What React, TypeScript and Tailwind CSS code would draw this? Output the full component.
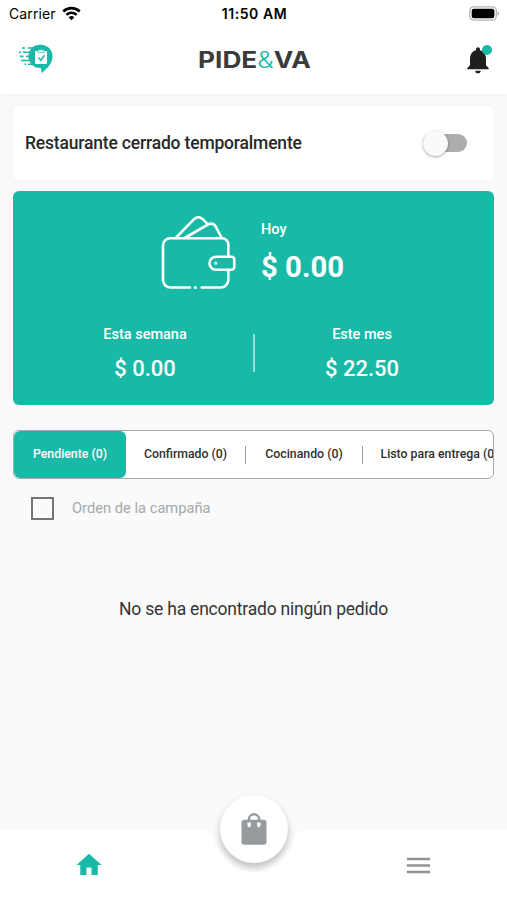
import { useState } from "react";
import { MdHome, MdMenu, MdNotifications } from "react-icons/md";

const tabs = [
  { label: "Pendiente (0)", width: "w-[112px]" },
  { label: "Confirmado (0)", width: "w-[120px]" },
  { label: "Cocinando (0)", width: "w-[117px]" },
  { label: "Listo para entrega (0)", width: "w-[153px]" },
];

function StatusBar() {
  return (
    <div className="grid grid-cols-3 items-center h-7 pl-[9px] pr-[7px] text-black font-['Inter',sans-serif]">
      <div className="flex items-center gap-1.5 -mt-px">
        <span className="text-[14px] tracking-[0.1px]">Carrier</span>
        <svg className="w-[19px] h-[15px]" viewBox="0 0 19 15" fill="none" stroke="currentColor">
          <path d="M1.3 5.5a11.8 11.8 0 0 1 16.4 0" strokeWidth="2.7" />
          <path d="M4.4 8.8a7.3 7.3 0 0 1 10.2 0" strokeWidth="2.5" />
          <path d="M9.5 14.2 6.7 11.3a4.2 4.2 0 0 1 5.6 0Z" fill="currentColor" stroke="none" />
        </svg>
      </div>
      <span className="-mt-px text-center text-[14px] font-semibold tracking-[0.55px] whitespace-nowrap">
        11:50 AM
      </span>
      <svg className="w-[31px] h-[15px] justify-self-end -mt-[2px]" viewBox="0 0 31 15">
        <rect x=".8" y=".9" width="26.5" height="13.2" rx="4" fill="#fff" stroke="#b4b4b4" strokeWidth="1.3" />
        <rect x="2.7" y="2.8" width="22.7" height="9.4" rx="2.2" fill="#000" />
        <path d="M28.7 5.2a2.6 2.6 0 0 1 0 4.6Z" fill="#aaa" />
      </svg>
    </div>
  );
}

function BrandMark() {
  return (
    <svg className="w-9 h-[31px]" viewBox="0 0 36 31" fill="#18b9a6">
      <path d="M22.5.8c7 0 12 5 12 11.8 0 7.2-5.5 11.8-10.7 16.7l-1-5.2c-4.2 0-7.2-1.2-9.2-3.6C11.3 18 10.5 15.500 10.500 12.500 10.500 5.500 15.500.8 22.500.8Z" />
      <path
        d="M10 4h7M4 4h3M5 8.200h8M1 8.200h2M8 12.400h5M2 12.400h3.500M3 16.500h10M10 20.300h5M6.500 20.300h1.700"
        fill="none"
        stroke="#18b9a6"
        strokeWidth="1.6"
      />
      <rect x="17" y="7" width="12" height="13" rx="1.3" fill="#fff" />
      <path d="M20 5.800h6v2.600h-6z" fill="#fff" stroke="#18b9a6" strokeWidth=".7" />
      <path d="m20.600 13.500 2.200 2.800 3.700-5" fill="none" stroke="#18b9a6" strokeWidth="1.5" />
    </svg>
  );
}

function Header() {
  return (
    <header className="h-[94px] bg-white shadow-[0_1px_4px_rgba(0,0,0,0.04)]">
      <StatusBar />
      <div className="flex items-center justify-between h-[63px] pl-[18px] pr-[12px]">
        <BrandMark />
        <h1 className="flex items-center mt-px mr-[5px] text-[23px] leading-none font-bold text-[#3b3b3b] font-['Inter',sans-serif] scale-x-[1.14]">
          PIDE<span className="font-light text-[#18b9a6]">&amp;</span>VA
        </h1>
        <button className="relative w-[36px] h-8 text-[#1f1f1f]" aria-label="Notificaciones">
          <MdNotifications className="w-[32px] h-[32px] ml-[3px]" />
          <span className="absolute top-px right-[3px] w-[10px] h-[10px] rounded-full bg-[#18b9a6]" />
        </button>
      </div>
    </header>
  );
}

function WalletIcon() {
  return (
    <svg
      className="w-[76px] h-[76px]"
      viewBox="0 0 76 76"
      fill="none"
      stroke="#fff"
      strokeWidth="2.6"
      strokeLinecap="round"
      strokeLinejoin="round"
    >
      <path d="M29 72.500H9.500a7.500 7.500 0 0 1-7.500-7.500V30.500a7.200 7.200 0 0 1 7.200-7.200H61a6.300 6.300 0 0 1 6.300 6.300v12" />
      <path d="M67.300 54.700v10.200a7.600 7.600 0 0 1-7.600 7.600h-19" />
      <path d="M55 41.700h15.500a2.800 2.800 0 0 1 2.800 2.800v7.400a2.800 2.800 0 0 1-2.800 2.800H55a6.500 6.500 0 0 1 0-13Z" />
      <path d="M14.700 23 33 4.200q4.500-4.200 8.700 0l4.700 4.700" />
      <path d="m23.700 23 23.500-13.600q4.800-2.200 7.400 2l6.100 11.600" />
      <path d="M34.300 72.500h.1M54.700 48.200h.1" strokeWidth="3" />
    </svg>
  );
}

function EarningsCard() {
  return (
    <section className="h-[214px] mt-[11px] pt-[24px] rounded-[6px] bg-[#18b9a6] text-white">
      <div className="flex pl-[148px] gap-[24px]">
        <WalletIcon />
        <div className="pt-[5px]">
          <p className="text-[14.5px] leading-5 font-medium">Hoy</p>
          <p className="mt-[9px] text-[29.3px] leading-[36px] font-bold">$ 0.00</p>
        </div>
      </div>
      <div className="flex justify-center items-start mt-[34px] text-center">
        <div className="w-[217px] pl-[2px]">
          <p className="text-[14.5px] leading-5 font-medium">Esta semana</p>
          <p className="mt-[10px] text-[22px] leading-7 font-medium">$ 0.00</p>
        </div>
        <div className="w-[2px] h-[38px] mt-[9px] bg-white/55" />
        <div className="w-[217px] pr-[2px]">
          <p className="text-[14.5px] leading-5 font-medium">Este mes</p>
          <p className="mt-[10px] text-[22px] leading-7 font-medium">$ 22.50</p>
        </div>
      </div>
    </section>
  );
}

function OrderTabs() {
  const [active, setActive] = useState(0);

  return (
    <div className="flex h-[49px] mt-[25px] overflow-hidden rounded-[6px] border border-[#a7abab] bg-white">
      {tabs.map((tab, index) => (
        <button
          key={tab.label}
          onClick={() => setActive(index)}
          className={`flex items-center shrink-0 ${tab.width} h-full text-[12.3px] font-medium ${
            active === index ? "rounded-[6px] bg-[#18b9a6] text-white" : "text-[#303030]"
          }`}
        >
          <span className="flex-1 whitespace-nowrap text-center">{tab.label}</span>
          {index > 0 && index < 3 && <span className="w-px h-[18px] bg-[#9b9b9b]" />}
        </button>
      ))}
    </div>
  );
}

function BottomNav() {
  return (
    <nav className="relative h-[70px]">
      <svg className="absolute inset-0 w-full h-full" viewBox="0 0 507 70">
        <path d="M0 0h201c7 0 10 3 13 9 6 16 20 33 40 33s34-17 40-33c3-6 6-9 13-9h200v70H0Z" fill="#fff" />
      </svg>
      <div className="relative flex items-center justify-between h-full pl-[74px] pr-[73px]">
        <button aria-label="Inicio">
          <MdHome className="w-[30px] h-[30px] text-[#18b9a6]" />
        </button>
        <button aria-label="Menú">
          <MdMenu className="w-[31px] h-[31px] text-[#929292]" />
        </button>
      </div>
      <button
        aria-label="Pedidos"
        className="absolute left-[220px] -top-[35px] flex items-center justify-center w-[68px] h-[68px] rounded-full bg-white shadow-[0_4px_7px_rgba(0,0,0,0.25)]"
      >
        <svg className="w-[26px] h-8" viewBox="0 0 26 32">
          <path d="M7.800 9V6.500a5.200 5.200 0 0 1 10.400 0V9" fill="none" stroke="#969b9d" strokeWidth="2.4" />
          <rect x=".5" y="6.800" width="25" height="25" rx="2.800" fill="#969b9d" />
          <path d="M6.500 9.500h3.400v2.700a1.700 2 0 0 1-3.400 0ZM16.100 9.500h3.400v2.700a1.700 2 0 0 1-3.400 0Z" fill="#fff" />
        </svg>
      </button>
    </nav>
  );
}

export default function App() {
  const [closed, setClosed] = useState(false);
  const [campaign, setCampaign] = useState(false);

  return (
    <div className="flex flex-col w-[507px] h-[900px] overflow-hidden bg-[#fafafa] font-['Roboto',sans-serif]">
      <Header />
      <main className="flex-1 px-[13px] pt-3">
        <section className="flex items-center justify-between h-[74px] pl-[12px] pr-[27px] rounded-[5px] bg-white shadow-[0_0_8px_rgba(0,0,0,0.035)]">
          <h2 className="text-[17.5px] tracking-[-0.18px] font-medium text-[#292929]">
            Restaurante cerrado temporalmente
          </h2>
          <button
            role="switch"
            aria-checked={closed}
            onClick={() => setClosed(!closed)}
            className={`flex items-center w-[44px] h-[18px] rounded-full bg-[#acacac] ${closed ? "justify-end" : ""}`}
          >
            <span className="w-[25px] h-[25px] rounded-full bg-[#fafafa] shadow-[0_1px_3px_rgba(0,0,0,0.35)]" />
          </button>
        </section>
        <EarningsCard />
        <OrderTabs />
        <button
          role="checkbox"
          aria-checked={campaign}
          onClick={() => setCampaign(!campaign)}
          className="flex items-center gap-[18px] h-6 mt-[17px] ml-[18px]"
        >
          <span className={`w-[23px] h-[23px] border-2 border-[#747474] ${campaign ? "bg-[#18b9a6]" : ""}`} />
          <span className="text-[14.7px] text-[#a4a8a9]">Orden de la campaña</span>
        </button>
        <p className="mt-[77px] text-center text-[17.5px] tracking-[-0.21px] leading-6 text-[#343434]">
          No se ha encontrado ningún pedido
        </p>
      </main>
      <BottomNav />
    </div>
  );
}
